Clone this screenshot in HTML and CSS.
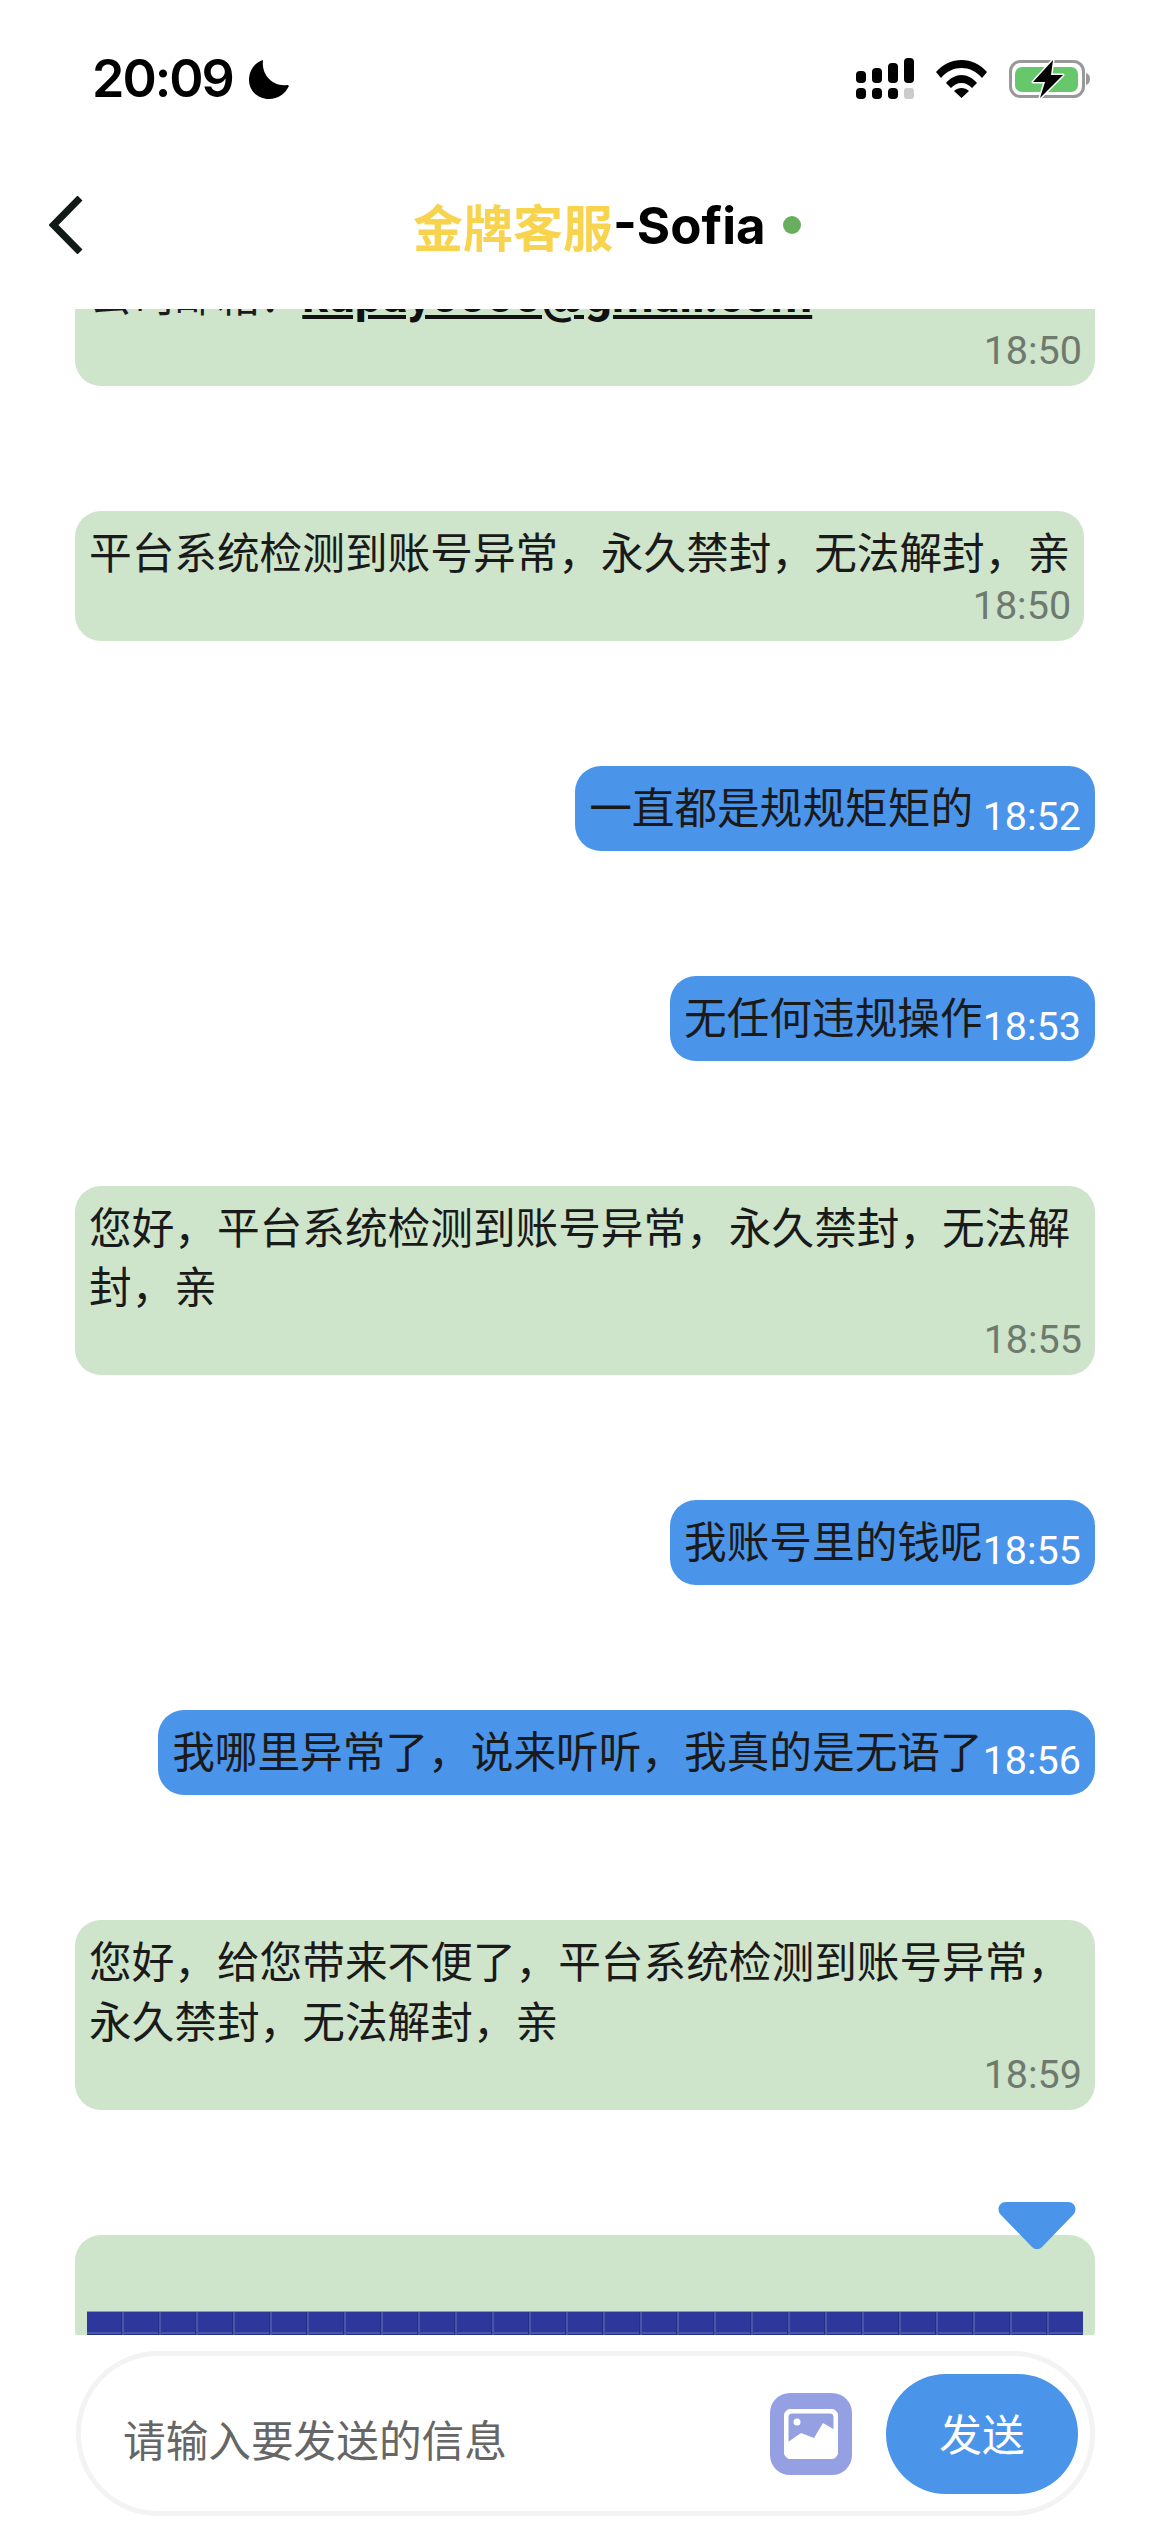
FILE: index.html
```html
<!DOCTYPE html>
<html>
<head>
    <title>金牌客服-Sofia</title>
    <link rel="stylesheet" href="styles.css">
</head>
<body>
    <div class="phone">
        <!-- status bar -->
        <div class="status-bar">
            <div class="status-left">
                <span class="clock">20:09</span>
                <svg class="moon" viewBox="0 0 40 39"><path d="M14 0C5 3 0 11 0 20c0 11 9 19 20 19 9 0 16-5 20-13-1-1-1-1-2-1C24 27 12 15 14 0z" fill="#000"/></svg>
            </div>
            <div class="status-right">
                <svg class="signal" viewBox="0 0 58 41">
                    <rect x="0" y="13" width="10" height="12" rx="4"/>
                    <rect x="16" y="10" width="10" height="15" rx="4"/>
                    <rect x="32" y="5" width="10" height="20" rx="4"/>
                    <rect x="48" y="0" width="10" height="25" rx="4"/>
                    <rect x="0" y="30" width="10" height="11" rx="4"/>
                    <rect x="16" y="30" width="10" height="11" rx="4"/>
                    <rect x="32" y="30" width="10" height="11" rx="4"/>
                    <rect x="48" y="30" width="10" height="11" rx="3" fill="#ccc"/>
                </svg>
                <svg class="wifi" viewBox="0 0 51 38">
                    <path d="M0 12C7 4 16 0 25.500 0S44 4 51 12l-5 6C40 11 33 8 25.500 8S11 11 5 18z"/>
                    <path d="M10 23c4-5 10-8 15.500-8S37 18 41 23l-5 5c-3-3-6-5-10.500-5S18 25 15 28z"/>
                    <path d="M18 31c2-2 5-3 7.500-3s5.500 1 7.500 3l-7.500 7z"/>
                </svg>
                <svg class="battery" viewBox="0 0 82 38">
                    <rect x="1.500" y="1.500" width="73" height="35" rx="10" fill="none" stroke="#999" stroke-width="3"/>
                    <rect x="6" y="7" width="63" height="25" rx="7" fill="#67c76b"/>
                    <path d="M77 13c3 1 4 3 4 6s-1 5-4 6z" fill="#999"/>
                    <path d="M44 0 24 22h12l-5 16 23-23H42z" fill="#000" stroke="#fff" stroke-width="3" stroke-linejoin="round" paint-order="stroke"/>
                </svg>
            </div>
        </div>

        <!-- header -->
        <div class="header">
            <svg class="back" viewBox="0 0 34 58"><path d="M31 2 4.500 29 31 56" fill="none" stroke="#111a16" stroke-width="7"/></svg>
            <div class="title">
                <span class="title-gold">金牌客服</span><span class="title-name">-Sofia</span>
                <span class="online-dot"></span>
            </div>
        </div>

        <!-- messages -->
        <div class="chat">
            <div class="msg msg-in msg-wide msg-first">
                <div class="msg-text">公司邮箱：<a class="mail">kupay0000@gmail.com</a></div>
                <div class="msg-time">18:50</div>
            </div>
            <div class="msg msg-in">
                <div class="msg-text">平台系统检测到账号异常，永久禁封，无法解封，亲</div>
                <div class="msg-time">18:50</div>
            </div>
            <div class="msg msg-out">一直都是规规矩矩的 <span class="msg-time-out">18:52</span></div>
            <div class="msg msg-out">无任何违规操作<span class="msg-time-out">18:53</span></div>
            <div class="msg msg-in msg-wide">
                <div class="msg-text">您好，平台系统检测到账号异常，永久禁封，无法解封，亲</div>
                <div class="msg-time">18:55</div>
            </div>
            <div class="msg msg-out">我账号里的钱呢<span class="msg-time-out">18:55</span></div>
            <div class="msg msg-out">我哪里异常了，说来听听，我真的是无语了<span class="msg-time-out">18:56</span></div>
            <div class="msg msg-in msg-wide">
                <div class="msg-text">您好，给您带来不便了，平台系统检测到账号异常，永久禁封，无法解封，亲</div>
                <div class="msg-time">18:59</div>
            </div>
            <div class="msg msg-in msg-wide msg-image">
                <div class="tile-strip"></div>
            </div>
            <svg class="scroll-down" viewBox="0 0 78 47"><path d="M8 0h62c7 0 10 8 5 13L44 45c-3 3-7 3-10 0L3 13C-2 8 1 0 8 0z" fill="#4a94ea"/></svg>
        </div>

        <!-- input -->
        <div class="input-bar">
            <div class="input-box">
                <span class="placeholder">请输入要发送的信息</span>
                <div class="pic-btn">
                    <svg viewBox="0 0 54 50">
                        <rect x="2" y="2" width="50" height="46" rx="6" fill="#95a0e3" stroke="#fff" stroke-width="5"/>
                        <circle cx="13" cy="13" r="3.500" fill="#fff"/>
                        <path d="M4 33l13-9 13 5 9-15 12 7v22a4 4 0 0 1-4 4H8a4 4 0 0 1-4-4z" fill="#fff"/>
                    </svg>
                </div>
                <div class="send-btn">发送</div>
            </div>
        </div>
    </div>
</body>
</html>
```

FILE: styles.css
```css
* {
    box-sizing: border-box;
}
html, body {
    margin: 0;
    padding: 0;
    background: #fff;
}
body {
    font-family: "Noto Sans CJK SC", Roboto, sans-serif;
}
.phone {
    width: 1170px;
    height: 2532px;
    display: flex;
    flex-direction: column;
    overflow: hidden;
}

.status-bar {
    height: 150px;
    padding: 54px 79px 0 92px;
    display: flex;
    justify-content: space-between;
    align-items: flex-start;
    flex: none;
}
.status-left {
    display: flex;
    align-items: center;
    gap: 16px;
}
.clock {
    font-family: Inter, sans-serif;
    font-size: 52px;
    font-weight: 600;
    letter-spacing: -2px;
    line-height: 50px;
    color: #000;
}
.moon {
    width: 40px;
    height: 39px;
}
.status-right {
    display: flex;
    align-items: center;
    padding-top: 4px;
}
.signal {
    width: 58px;
    height: 41px;
    margin-right: 22px;
}
.wifi {
    width: 51px;
    height: 38px;
    margin-right: 22px;
}
.battery {
    width: 82px;
    height: 38px;
    overflow: visible;
}

.header {
    height: 159px;
    padding-left: 49px;
    display: flex;
    align-items: flex-start;
    flex: none;
}
.back {
    width: 34px;
    height: 58px;
    margin-top: 46px;
}
.title {
    display: flex;
    align-items: center;
    height: 150px;
    margin-left: 330px;
    font-size: 50px;
    line-height: 147px;
    font-weight: 700;
}
.title-gold {
    color: #f8d44e;
}
.title-name {
    color: #000;
    font-family: Inter, sans-serif;
    font-size: 51px;
    font-weight: 700;
}
.online-dot {
    width: 18px;
    height: 18px;
    margin-left: 17px;
    border-radius: 50%;
    background: #67ae5f;
}

.chat {
    flex: 1;
    overflow: hidden;
    position: relative;
    padding: 0 75px;
    display: flex;
    flex-direction: column;
    align-items: flex-start;
}
.msg {
    padding: 0 14px;
    border-radius: 26px;
    font-size: 42.67px;
    color: #1a1a1a;
    margin-bottom: 125px;
    flex: none;
}
.msg-in {
    background: #cee4cb;
}
.msg-wide {
    width: 1020px;
}
.msg-first {
    margin-top: -55.5px;
}
.msg-text {
    line-height: 59.5px;
    padding-top: 10px;
}
.msg-time {
    margin-top: 3.5px;
    margin-right: -1px;
    text-align: right;
    font-family: Roboto, sans-serif;
    font-size: 39.5px;
    line-height: 44px;
    color: #6f7a6f;
    padding-bottom: 13px;
}
.mail {
    font-family: Roboto, sans-serif;
    font-size: 48px;
    font-weight: 700;
    color: #111;
    text-decoration: underline;
    text-decoration-thickness: 4px;
    text-underline-offset: 3px;
}
.msg-out {
    align-self: flex-end;
    height: 85px;
    line-height: 79px;
    background: #4a94ea;
    white-space: nowrap;
}
.msg-time-out {
    font-family: Roboto, sans-serif;
    font-size: 39.5px;
    color: #fff;
    position: relative;
    top: 6px;
}
.msg-image {
    height: 120px;
    padding: 76px 12px 0;
    margin-bottom: 0;
}
.tile-strip {
    height: 26px;
    border-top: 1px solid #8b92bd;
    background:
        linear-gradient(#2d379c 0, #2d379c 20px, #4a55a8 20px, #4a55a8 22px, #28328f 22px),
        #2d379c;
}
.tile-strip::after {
    content: "";
    display: block;
    height: 100%;
    background: repeating-linear-gradient(90deg, transparent 0, transparent 34px, #252f8a 34px, #252f8a 35px, #4a55a8 35px, #4a55a8 37px);
}
.scroll-down {
    position: absolute;
    right: 94px;
    top: 1893px;
    width: 78px;
    height: 47px;
}

.input-bar {
    height: 197px;
    padding: 16px 75px 0 76px;
    flex: none;
}
.input-box {
    height: 165px;
    border: 5px solid #f3f3f3;
    border-radius: 82px;
    display: flex;
    align-items: center;
    padding-left: 42px;
    padding-right: 12px;
}
.placeholder {
    flex: 1;
    font-size: 42.67px;
    color: #666;
    padding-top: 10px;
}
.pic-btn {
    width: 82px;
    height: 82px;
    border-radius: 20px;
    background: #95a0e3;
    display: flex;
    align-items: center;
    justify-content: center;
    margin-right: 34px;
}
.pic-btn svg {
    width: 54px;
    height: 50px;
}
.send-btn {
    width: 192px;
    height: 120px;
    padding-bottom: 2px;
    border-radius: 60px;
    background: #4a94ea;
    color: #fff;
    font-size: 42.67px;
    display: flex;
    align-items: center;
    justify-content: center;
}
```
